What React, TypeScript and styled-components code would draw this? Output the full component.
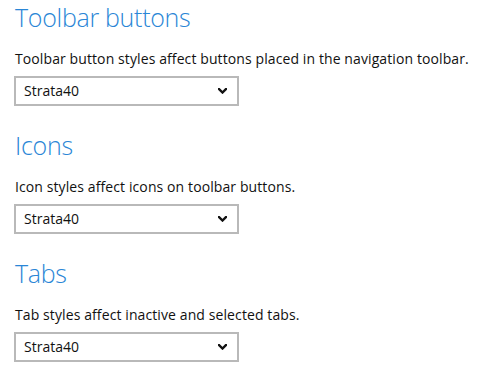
import React from "react";
import styled, { createGlobalStyle } from "styled-components";

const GlobalStyle = createGlobalStyle`
  html, body {
    margin: 0;
    padding: 0;
    background: #fff;
  }
  body {
    font-family: "Open Sans", "Noto Sans", sans-serif;
    color: #111;
  }
`;

const Page = styled.div`
  display: flex;
  flex-direction: column;
  padding: 1px 0 0 14px;
`;

const Section = styled.section`
  display: flex;
  flex-direction: column;
  align-items: flex-start;
  margin-bottom: 23px;
`;

const Heading = styled.h2`
  margin: 0 0 16px 1px;
  font-size: 25px;
  line-height: 32px;
  font-weight: 300;
  color: #2a86d6;
  letter-spacing: -0.3px;
`;

const Description = styled.p`
  margin: 0 0 7px 1px;
  font-size: 14px;
  line-height: 20px;
  letter-spacing: 0.1px;
  color: #111;
`;

const Dropdown = styled.div`
  box-sizing: border-box;
  width: 225px;
  height: 30px;
  display: flex;
  align-items: center;
  justify-content: space-between;
  padding: 0 10px 0 8px;
  border: 2px solid #b9b9b9;
  background: #fff;
  font-size: 14px;
  line-height: 20px;
  color: #111;
`;

const Chevron = () => (
  <svg width="9" height="6" viewBox="0 0 9 6">
    <polyline
      points="1,1 4.5,4.5 8,1"
      fill="none"
      stroke="#111"
      strokeWidth="2.4"
      strokeLinecap="square"
    />
  </svg>
);

const settings = [
  {
    title: "Toolbar buttons",
    text: "Toolbar button styles affect buttons placed in the navigation toolbar.",
  },
  { title: "Icons", text: "Icon styles affect icons on toolbar buttons." },
  { title: "Tabs", text: "Tab styles affect inactive and selected tabs." },
];

export default function App() {
  return (
    <>
      <GlobalStyle />
      <Page>
        {settings.map((s) => (
          <Section key={s.title}>
            <Heading>{s.title}</Heading>
            <Description>{s.text}</Description>
            <Dropdown>
              <span>Strata40</span>
              <Chevron />
            </Dropdown>
          </Section>
        ))}
      </Page>
    </>
  );
}
